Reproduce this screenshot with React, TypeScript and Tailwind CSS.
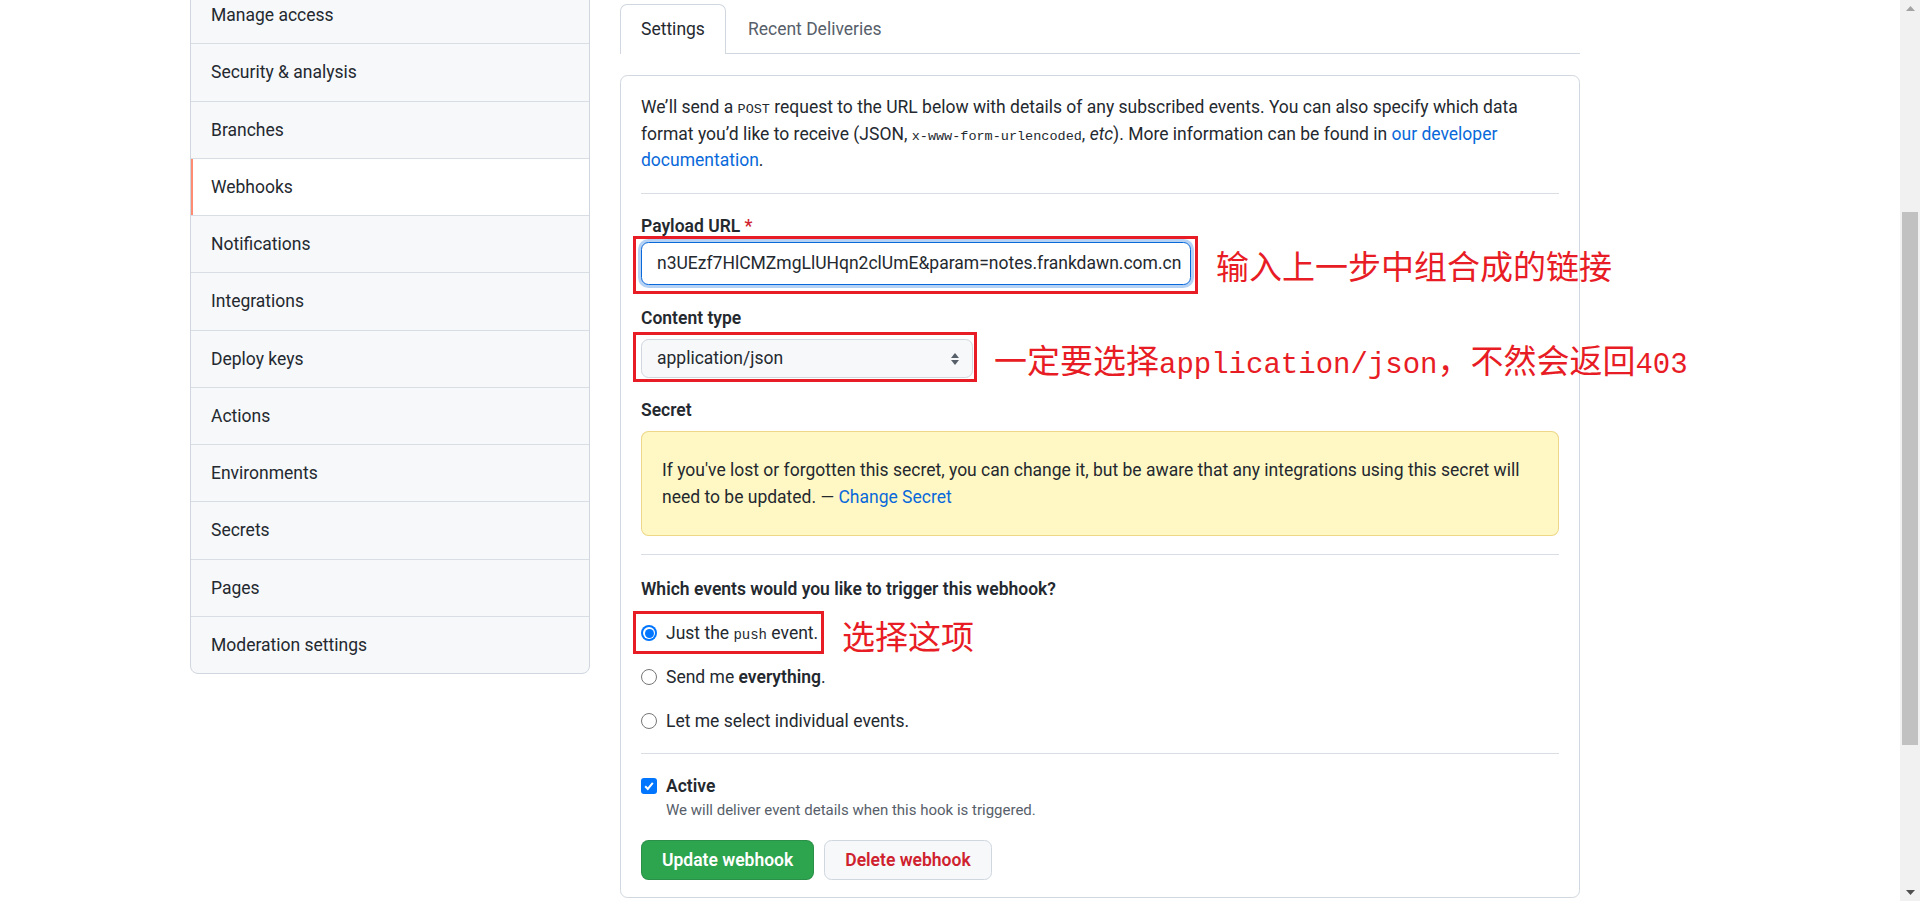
import React from "react";

const items = [
  "Manage access",
  "Security & analysis",
  "Branches",
  "Webhooks",
  "Notifications",
  "Integrations",
  "Deploy keys",
  "Actions",
  "Environments",
  "Secrets",
  "Pages",
  "Moderation settings",
];

function Radio({ checked }: { checked?: boolean }) {
  return checked ? (
    <span className="w-[16px] h-[16px] rounded-full bg-[#0075ff] flex items-center justify-center shrink-0">
      <span className="w-[12px] h-[12px] rounded-full bg-white flex items-center justify-center">
        <span className="w-[9px] h-[9px] rounded-full bg-[#0075ff]" />
      </span>
    </span>
  ) : (
    <span className="w-[16px] h-[16px] rounded-full border-[1.5px] border-[#767676] bg-white shrink-0" />
  );
}

export default function App() {
  return (
    <div className="flex h-[901px] w-full overflow-hidden bg-white text-[#24292f] text-[17.5px] leading-[26.25px] [font-family:Roboto,sans-serif]">
      <div className="flex-1 flex items-start pl-[190px] gap-[30px]">
        {/* Sidebar */}
        <nav className="w-[400px] shrink-0 mt-[-14px] border border-[#d0d7de] rounded-b-[8px] bg-[#f6f8fa] overflow-hidden">
          {items.map((it, i) => (
            <div
              key={it}
              className={
                (i < items.length - 1 ? "border-b border-[#d8dee4] " : "") +
                (it === "Webhooks"
                  ? "bg-white shadow-[inset_2px_0_0_#fd8c73] "
                  : "") +
                "px-[20px] py-[15px]"
              }
            >
              {it}
            </div>
          ))}
        </nav>

        {/* Main */}
        <main className="w-[960px] shrink-0 pt-[4px]">
          <div className="flex items-end border-b border-[#d0d7de]">
            <div className="h-[50px] -mb-px flex items-center px-[20px] border border-b-0 border-[#d0d7de] rounded-t-[7px] bg-white text-[#24292f]">
              Settings
            </div>
            <div className="h-[50px] -mb-px flex items-center px-[22px] text-[#57606a]">
              Recent Deliveries
            </div>
          </div>

          <div className="mt-[21px] border border-[#d0d7de] rounded-[7.5px] px-[20px] pt-[18px] pb-[17px]">
            <p className="leading-[26.5px]">
              We’ll send a{" "}
              <span className="text-[13.5px] leading-none [font-family:'Liberation_Mono',monospace]">POST</span>{" "}
              request to the URL below with details of any subscribed events. You can also specify which data
              <br />
              format you’d like to receive (JSON,{" "}
              <span className="text-[13.5px] leading-none [font-family:'Liberation_Mono',monospace]">x-www-form-urlencoded</span>,{" "}
              <em>etc</em>). More information can be found in{" "}
              <span className="text-[#0969da]">
                our developer
                <br />
                documentation
              </span>
              .
            </p>

            <div className="mt-[19px] h-px bg-[#d8dee4]" />

            {/* Payload URL */}
            <div className="mt-[19px] font-semibold">
              Payload URL <span className="text-[#cf222e]">*</span>
            </div>
            <div className="mt-[3px] relative w-[550px]">
              <div className="h-[43px] flex items-center px-[15px] border border-[#0969da] rounded-[7.5px] shadow-[0_0_0_3px_rgba(9,105,218,0.3)] overflow-hidden whitespace-nowrap bg-white">
                n3UEzf7HlCMZmgLlUHqn2clUmE&amp;param=notes.frankdawn.com.cn
                <span className="ml-[1px] w-px h-[22px] bg-black" />
              </div>
              <div className="absolute left-[-8px] top-[-6px] w-[565px] h-[58px] border-[3px] border-[#e81c24] pointer-events-none" />
              <div className="absolute left-[575px] top-[3px] whitespace-nowrap text-[33px] leading-[40px] text-[#e81c24] [font-family:'Noto_Sans_CJK_SC',sans-serif]">
                输入上一步中组合成的链接
              </div>
            </div>

            {/* Content type */}
            <div className="mt-[20px] font-semibold">Content type</div>
            <div className="mt-[8px] relative w-[332px]">
              <div className="h-[39px] flex items-center justify-between pl-[15px] pr-[12px] border border-[#d0d7de] rounded-[7.5px] bg-[#f6f8fa]">
                <span>application/json</span>
                <svg width="10" height="16" viewBox="0 0 10 16">
                  <path d="M5 2 L9 7 L1 7 Z" fill="#57606a" />
                  <path d="M5 14 L9 9 L1 9 Z" fill="#57606a" />
                </svg>
              </div>
              <div className="absolute left-[-8px] top-[-7px] w-[344px] h-[50px] border-[3px] border-[#e81c24] pointer-events-none" />
              <div className="absolute left-[353px] top-[0px] whitespace-nowrap text-[33px] leading-[40px] text-[#e81c24] [font-family:'Noto_Sans_CJK_SC',sans-serif]">
                一定要选择
                <span className="text-[29px] leading-none [font-family:'Liberation_Mono',monospace]">application/json</span>
                ，不然会返回
                <span className="text-[29px] leading-none [font-family:'Liberation_Mono',monospace]">403</span>
              </div>
            </div>

            {/* Secret */}
            <div className="mt-[19px] font-semibold">Secret</div>
            <div className="mt-[8px] border border-[#d4a72c66] bg-[#fff8c5] rounded-[7.5px] px-[20px] py-[25px]">
              If you've lost or forgotten this secret, you can change it, but be aware that any integrations using this secret will
              need to be updated. — <span className="text-[#0969da]">Change Secret</span>
            </div>

            <div className="mt-[18px] h-px bg-[#d8dee4]" />

            <div className="mt-[21px] font-semibold">Which events would you like to trigger this webhook?</div>

            <div className="mt-[18px] flex flex-col gap-[18px]">
              <div className="relative flex items-center gap-[9px] h-[26px]">
                <Radio checked />
                <span>
                  Just the{" "}
                  <span className="text-[14px] leading-none [font-family:'Liberation_Mono',monospace]">push</span> event.
                </span>
                <div className="absolute left-[-8px] top-[-9px] w-[191px] h-[43px] border-[3px] border-[#e81c24] pointer-events-none" />
                <div className="absolute left-[201px] top-[-5px] whitespace-nowrap text-[33px] leading-[40px] text-[#e81c24] [font-family:'Noto_Sans_CJK_SC',sans-serif]">
                  选择这项
                </div>
              </div>
              <div className="flex items-center gap-[9px] h-[26px]">
                <Radio />
                <span>
                  Send me <span className="font-semibold">everything</span>.
                </span>
              </div>
              <div className="flex items-center gap-[9px] h-[26px]">
                <Radio />
                <span>Let me select individual events.</span>
              </div>
            </div>

            <div className="mt-[19px] h-px bg-[#d8dee4]" />

            <div className="mt-[19px] flex items-center gap-[9px]">
              <span className="w-[16px] h-[16px] rounded-[3px] bg-[#0075ff] flex items-center justify-center">
                <svg width="12" height="12" viewBox="0 0 12 12">
                  <path d="M2.2 6.3 L4.8 9 L9.8 2.8" stroke="white" strokeWidth="2" fill="none" />
                </svg>
              </span>
              <span className="font-semibold">Active</span>
            </div>
            <div className="pl-[25px] text-[15px] leading-[22px] text-[#57606a]">
              We will deliver event details when this hook is triggered.
            </div>

            <div className="mt-[19px] flex gap-[10px]">
              <button className="h-[40px] px-[20px] bg-[#2da44e] text-white font-semibold rounded-[7.5px] border border-[rgba(27,31,36,0.15)]">
                Update webhook
              </button>
              <button className="h-[40px] px-[20px] bg-[#f6f8fa] text-[#cf222e] font-semibold rounded-[7.5px] border border-[#d0d7de]">
                Delete webhook
              </button>
            </div>
          </div>
        </main>
      </div>

      {/* Scrollbar */}
      <div className="w-[20px] h-full bg-[#f1f1f1] flex flex-col items-center shrink-0">
        <div className="h-[17px] flex items-center justify-center">
          <svg width="9" height="5" viewBox="0 0 9 5">
            <path d="M0 5 L4.5 0 L9 5 Z" fill="#a3a3a3" />
          </svg>
        </div>
        <div className="mt-[195px] w-[16px] h-[533px] bg-[#c1c1c1]" />
        <div className="flex-1" />
        <div className="h-[17px] flex items-center justify-center">
          <svg width="9" height="5" viewBox="0 0 9 5">
            <path d="M0 0 L4.5 5 L9 0 Z" fill="#505050" />
          </svg>
        </div>
      </div>
    </div>
  );
}
